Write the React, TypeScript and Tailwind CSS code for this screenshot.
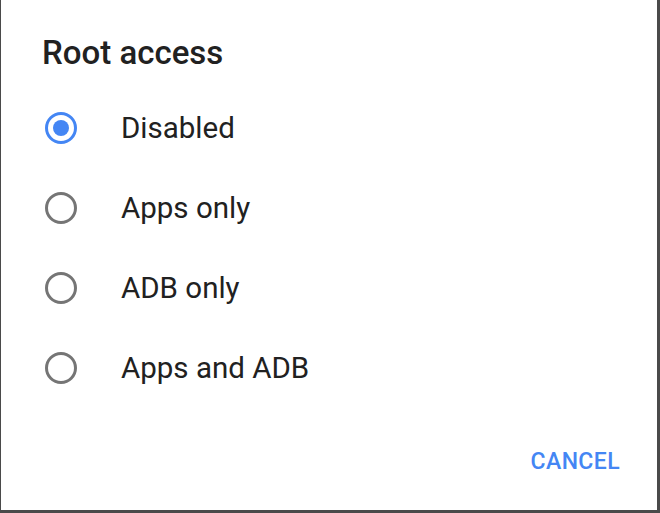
const options = ['Disabled', 'Apps only', 'ADB only', 'Apps and ADB']

function Radio({ checked }: { checked: boolean }) {
  return (
    <svg width="34" height="34" viewBox="0 0 34 34">
      <circle cx="17" cy="17" r="14.5" fill="none" stroke={checked ? '#4486f4' : '#757575'} strokeWidth="3" />
      {checked && <circle cx="17" cy="17" r="8" fill="#4486f4" />}
    </svg>
  )
}

export default function App() {
  return (
    <div className="w-[660px] h-[513px] bg-[#4a4a4a] pl-px pr-[3px] pb-[3px] font-['Roboto',sans-serif]">
      <div className="w-full h-full bg-white flex flex-col">
        <h1 className="pl-[41px] pt-[35px] text-[33px] leading-[36px] font-medium text-[#212121]">Root access</h1>
        <div className="flex flex-col pt-[17px]">
          {options.map((o, i) => (
            <div key={o} className="flex items-center h-[80px]">
              <div className="pl-[43px] w-[120px] flex">
                <Radio checked={i === 0} />
              </div>
              <span className="text-[29.5px] leading-[36px] text-[#212121]">{o}</span>
            </div>
          ))}
        </div>
        <div className="flex justify-end mt-auto pr-[37px] pb-[34px]">
          <button className="text-[23px] leading-[28px] font-medium text-[#4486f4] tracking-[0.4px]">CANCEL</button>
        </div>
      </div>
    </div>
  )
}
